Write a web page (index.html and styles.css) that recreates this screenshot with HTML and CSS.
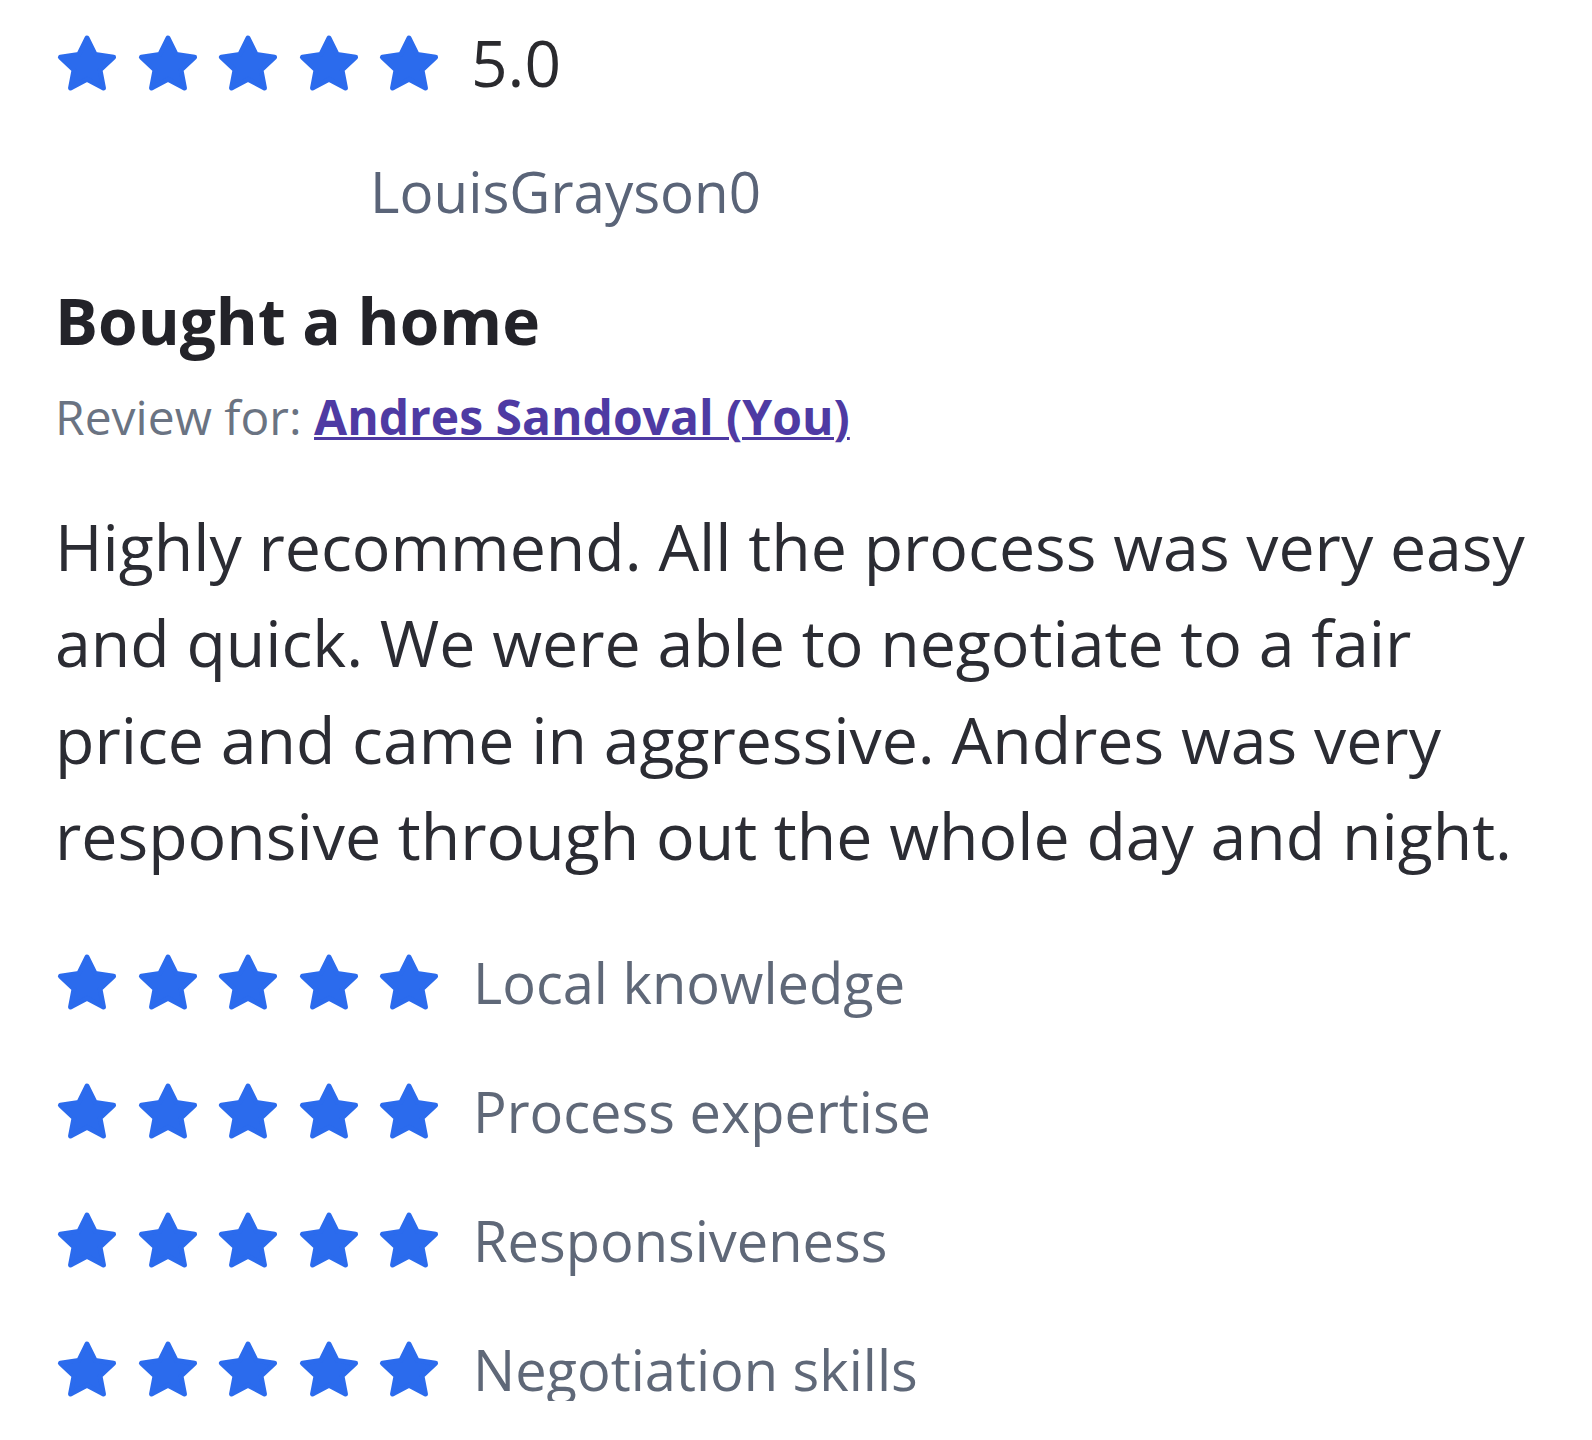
FILE: index.html
```html
<!DOCTYPE html>
<html lang="en">
<head>
<meta charset="utf-8">
<title>Review</title>
<link rel="stylesheet" href="styles.css">
</head>
<body>
<svg width="0" height="0" class="defs" aria-hidden="true">
  <defs>
    <symbol id="star" viewBox="0 0 24 24">
      <polygon points="12,2.6 15.1,8.8 22,9.8 16.9,14.6 18.2,21.4 12,18.1 5.8,21.4 7.1,14.6 2,9.8 8.9,8.8" fill="currentColor" stroke="currentColor" stroke-width="1.8" stroke-linejoin="round"/>
    </symbol>
  </defs>
</svg>
<main class="review">
  <div class="rating-row">
    <div class="stars">
      <svg class="star"><use href="#star"/></svg>
      <svg class="star"><use href="#star"/></svg>
      <svg class="star"><use href="#star"/></svg>
      <svg class="star"><use href="#star"/></svg>
      <svg class="star"><use href="#star"/></svg>
    </div>
    <span class="score">5.0</span>
  </div>

  <div class="author">LouisGrayson0</div>

  <h1 class="title">Bought a home</h1>
  <p class="review-for">Review for: <a class="agent" href="#">Andres Sandoval (You)</a></p>

  <p class="body">Highly recommend. All the process was very easy and quick. We were able to negotiate to a fair price and came in aggressive. Andres was very responsive through out the whole day and night.</p>

  <ul class="categories">
    <li class="rating-row">
      <div class="stars">
        <svg class="star"><use href="#star"/></svg>
        <svg class="star"><use href="#star"/></svg>
        <svg class="star"><use href="#star"/></svg>
        <svg class="star"><use href="#star"/></svg>
        <svg class="star"><use href="#star"/></svg>
      </div>
      <span class="label">Local knowledge</span>
    </li>
    <li class="rating-row">
      <div class="stars">
        <svg class="star"><use href="#star"/></svg>
        <svg class="star"><use href="#star"/></svg>
        <svg class="star"><use href="#star"/></svg>
        <svg class="star"><use href="#star"/></svg>
        <svg class="star"><use href="#star"/></svg>
      </div>
      <span class="label">Process expertise</span>
    </li>
    <li class="rating-row">
      <div class="stars">
        <svg class="star"><use href="#star"/></svg>
        <svg class="star"><use href="#star"/></svg>
        <svg class="star"><use href="#star"/></svg>
        <svg class="star"><use href="#star"/></svg>
        <svg class="star"><use href="#star"/></svg>
      </div>
      <span class="label">Responsiveness</span>
    </li>
    <li class="rating-row">
      <div class="stars">
        <svg class="star"><use href="#star"/></svg>
        <svg class="star"><use href="#star"/></svg>
        <svg class="star"><use href="#star"/></svg>
        <svg class="star"><use href="#star"/></svg>
        <svg class="star"><use href="#star"/></svg>
      </div>
      <span class="label">Negotiation skills</span>
    </li>
  </ul>
</main>
</body>
</html>
```

FILE: styles.css
```css
html, body {
  margin: 0;
  padding: 0;
  background: #ffffff;
}

body {
  font-family: "Open Sans", "Noto Sans", "Liberation Sans", sans-serif;
  color: #2b2c33;
}

.defs {
  position: absolute;
  width: 0;
  height: 0;
  overflow: hidden;
}

.review {
  padding: 31px 45px 0 55px;
}

.rating-row {
  display: flex;
  align-items: center;
  height: 64px;
}

.stars {
  display: flex;
  gap: 16.5px;
  color: #2b6bed;
}

.star {
  width: 64px;
  height: 64px;
  display: block;
}

.score {
  margin-left: 30px;
  font-size: 64px;
  line-height: 64px;
  color: #2a2a2e;
}

.author {
  margin: 57px 0 0 315px;
  font-size: 56.5px;
  line-height: 80px;
  color: #5a6478;
}

.title {
  margin: 49px 0 0 0;
  font-size: 64px;
  line-height: 80px;
  font-weight: 700;
  color: #232329;
}

.review-for {
  margin: 24px 0 0 0;
  font-size: 48px;
  line-height: 64px;
  color: #6a7382;
}

.agent {
  color: #4e3aa3;
  font-weight: 700;
  text-decoration: underline;
  text-decoration-thickness: 3px;
}

.body {
  margin: 48.5px 0 0 0;
  font-size: 64.4px;
  line-height: 96.5px;
  color: #2b2c33;
}

.categories {
  list-style: none;
  margin: 66px 0 0 0;
  padding: 0;
  display: flex;
  flex-direction: column;
  gap: 65px;
}

.label {
  margin-left: 32px;
  font-size: 56px;
  line-height: 64px;
  color: #5f6878;
}
```
